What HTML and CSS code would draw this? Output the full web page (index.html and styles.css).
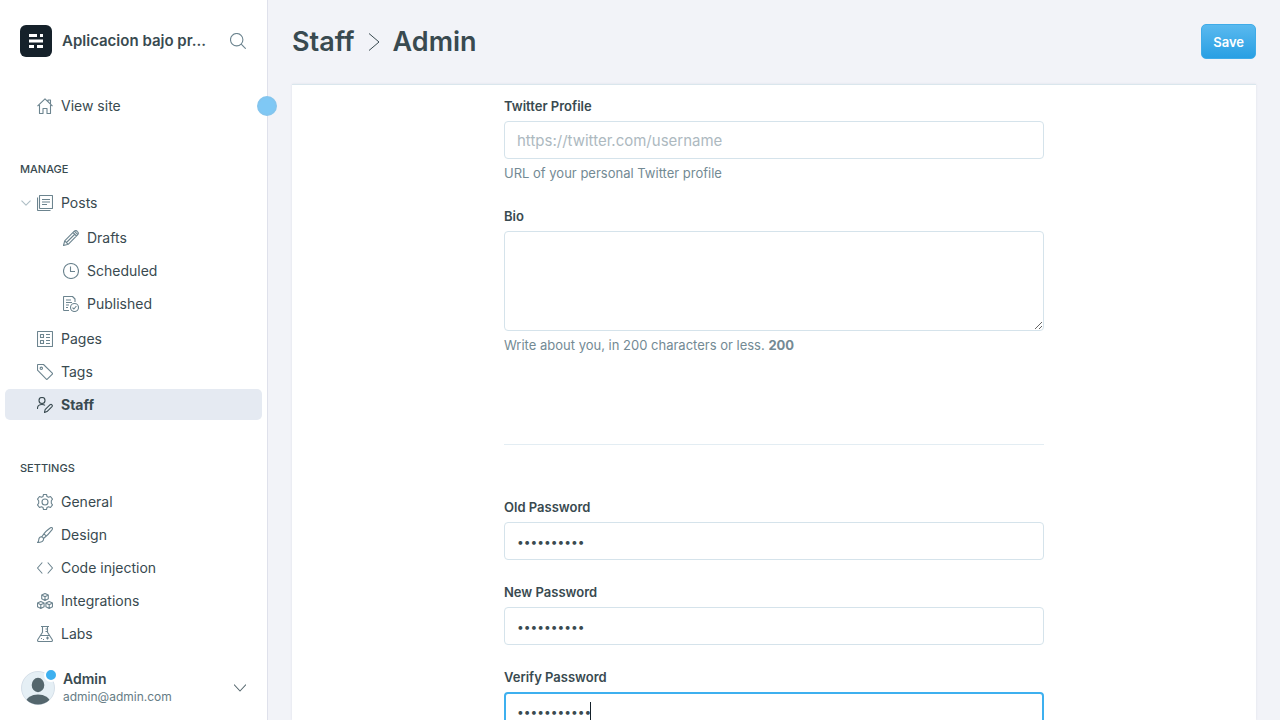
FILE: index.html
```html
<!DOCTYPE html>
<html lang="en">
<head>
<meta charset="utf-8">
<meta name="viewport" content="width=device-width, initial-scale=1">
<title>Staff - Admin</title>
<link rel="stylesheet" href="styles.css">
</head>
<body>
<div class="app">
  <nav class="sidebar" aria-label="Main">
    <header class="brand">
      <svg class="brand-logo" viewBox="0 0 32 32" aria-hidden="true"><rect width="32" height="32" rx="6" fill="#15212a"/><path fill="#fff" d="M9 9h8v3H9zM20 9h3v3h-3zM9 14.500h14v3H9zM9 20h5v3H9zM17 20h6v3h-6z"/></svg>
      <strong class="brand-name">Aplicacion bajo pr...</strong>
      <button class="icon-button" type="button" aria-label="Search"><svg class="icon" viewBox="0 0 16 16"><circle cx="6.700" cy="6.700" r="6.200"/><path d="M11.200 11.200l4.500 4.500"/></svg></button>
    </header>

    <div class="nav-scroll">
      <ul class="nav-list site-list">
        <li class="nav-item"><a class="nav-link" href="#"><svg class="icon" viewBox="0 0 16 16"><path d="M.500 8.200L8 .900l7.500 7.300M2.500 7v8.500h3.500v-5h4v5h3.500V7M11 3.500V2h2.500v4"/></svg>View site</a></li>
      </ul>

      <h2 class="nav-title">Manage</h2>
      <ul class="nav-list">
        <li class="nav-item">
          <button class="nav-toggle" type="button" aria-label="Collapse posts" aria-expanded="true"><svg class="icon icon-toggle" viewBox="0 0 10 10"><path d="M.500 2.700L5 7.200l4.500-4.500"/></svg></button>
          <a class="nav-link" href="#"><svg class="icon" viewBox="0 0 16 16"><rect x="2.500" y=".500" width="13" height="13" rx=".500"/><path d="M.500 2.500v12.300q0 .700.700.700h12.300M5 4.500h8M5 7h8M5 9.500h5"/></svg>Posts</a>
        </li>
        <li>
          <ul class="nav-list nav-sub">
            <li class="nav-item"><a class="nav-link" href="#"><svg class="icon" viewBox="0 0 16 16"><path d="M.500 15.500l1.200-4.700L11.300 1.200q1.700-1.400 3.100.400 1.700 1.600.400 3.100L5.200 14.300zM1.700 10.800l3.500 3.500M10 2.500L13.500 6M11.300 1.200l3.500 3.500M3.500 12.500l8-8"/></svg>Drafts</a></li>
            <li class="nav-item"><a class="nav-link" href="#"><svg class="icon" viewBox="0 0 16 16"><circle cx="8" cy="8" r="7.500"/><path d="M7.500 3.500v5H12"/></svg>Scheduled</a></li>
            <li class="nav-item"><a class="nav-link" href="#"><svg class="icon" viewBox="0 0 16 16"><path d="M6 14.500H1.200q-.700 0-.700-.700V1.200q0-.700.700-.700h8.300l2.500 2.500v3M3 4h5M3 6.500h6M3 9h3M3 11.500h2"/><circle cx="11.500" cy="11.500" r="4"/><path d="M9.500 11.700l1.400 1.300 2.500-3"/></svg>Published</a></li>
          </ul>
        </li>
        <li class="nav-item"><a class="nav-link" href="#"><svg class="icon" viewBox="0 0 16 16"><rect x=".500" y=".500" width="15" height="15" rx=".500"/><path d="M3.500 3.500h3v3h-3zM3.500 9.500h3v3h-3zM9 3.500h4M9 6.500h4M9 9.500h4M9 12.500h4"/></svg>Pages</a></li>
        <li class="nav-item"><a class="nav-link" href="#"><svg class="icon" viewBox="0 0 16 16"><path d="M.500 1.200v5l8.800 9q.500.500 1 0l5-5q.500-.500 0-1L6.500.500H1.200q-.700 0-.700.700z"/><circle cx="4.300" cy="4.300" r="1.200"/></svg>Tags</a></li>
        <li class="nav-item is-active"><a class="nav-link" href="#" aria-current="page"><svg class="icon" viewBox="0 0 16 16"><circle cx="5" cy="3.500" r="3"/><path d="M.500 12V11Q.700 7.500 5 7.500q2 0 3 .900M7.500 15.500l.600-2.800 5-5q1-.700 1.800.100.900.900.100 1.800l-5 5z"/></svg>Staff</a></li>
      </ul>

      <h2 class="nav-title">Settings</h2>
      <ul class="nav-list">
        <li class="nav-item"><a class="nav-link" href="#"><svg class="icon" viewBox="0 0 16 16"><path d="M6.500.500h3l.500 2 1.500.800 2-.800 2 2.600-1.200 1.700v2.400l1.200 1.700-2 2.600-2-.800-1.500.800-.500 2h-3l-.500-2-1.500-.800-2 .800-2-2.600 1.200-1.700V6.800L.500 5.100l2-2.600 2 .800L6 2.500z"/><circle cx="8" cy="8" r="3"/></svg>General</a></li>
        <li class="nav-item"><a class="nav-link" href="#"><svg class="icon" viewBox="0 0 16 16"><path d="M.500 15.500q1.200-.800 1.200-2.500Q2 9.800 4.300 9.800q2 .200 2.300 2.200Q6.500 15.500.500 15.500zM4.800 9.700q4-6.200 8.700-9 1.200-.500 1.800.200.400.700-.200 1.700Q11.500 7.500 6.500 11.500M7 6.800l2.400 2.300"/></svg>Design</a></li>
        <li class="nav-item"><a class="nav-link" href="#"><svg class="icon" viewBox="0 0 16 16"><path d="M5.300 2.500L.500 8l4.800 5.500M10.700 2.500L15.500 8l-4.800 5.500"/></svg>Code injection</a></li>
        <li class="nav-item"><a class="nav-link" href="#"><svg class="icon" viewBox="0 0 16 16"><path d="M8 .500l3.300 1.500v3.800L8 7.500 4.700 5.800V2zM4.700 2L8 3.700 11.300 2M8 3.700v3.800M3.800 8.500l3.300 1.500v3.800l-3.300 1.700-3.300-1.700V10zM.500 10l3.300 1.700L7.100 10M3.800 11.700v3.800M12.200 8.500l3.300 1.500v3.800l-3.300 1.700-3.300-1.700V10zM8.900 10l3.300 1.700 3.300-1.700M12.200 11.700v3.800"/></svg>Integrations</a></li>
        <li class="nav-item"><a class="nav-link" href="#"><svg class="icon" viewBox="0 0 16 16"><path d="M4 .500h8M5.500.500v5.700L.700 13.800q-.500 1.700 1 1.700h12.600q1.500 0 1-1.700L10.500 6.200V.500M3.300 9.500h9.400M8.500 3h2M8.500 5.500h2M10.500 10.500v3M9 12h3M4 12.500h1M6 13.500h1"/></svg>Labs</a></li>
      </ul>
    </div>

    <button class="account" type="button">
      <span class="avatar">
        <svg viewBox="0 0 34 34" aria-hidden="true"><defs><clipPath id="avatar-clip"><circle cx="17" cy="17" r="16.500"/></clipPath></defs><circle cx="17" cy="17" r="16.500" fill="#e5eff5" stroke="#d5dfe8"/><g clip-path="url(#avatar-clip)" fill="#54666d"><ellipse cx="17" cy="14" rx="6.300" ry="7.200"/><ellipse cx="17" cy="31" rx="12" ry="7.500"/></g></svg>
        <span class="badge"></span>
      </span>
      <span class="account-text"><strong class="account-name">Admin</strong><span class="account-mail">admin@admin.com</span></span>
      <svg class="icon icon-account" viewBox="0 0 12 12"><path d="M0 2.500l6 6.500 6-6.500"/></svg>
    </button>
    <span class="pointer"></span>
  </nav>

  <main class="main">
    <header class="page-header">
      <h1 class="page-title"><a class="page-link" href="#">Staff</a><svg class="title-arrow" viewBox="0 0 12 18" aria-hidden="true"><path d="M1 .500l10 8.500L1 17.500"/></svg>Admin</h1>
      <button class="save" type="submit" form="profile">Save</button>
    </header>
    <section class="panel">
      <form class="form" id="profile">
        <div class="field">
          <label class="label" for="twitter">Twitter Profile</label>
          <input class="input" id="twitter" type="url" placeholder="https://twitter.com/username">
          <p class="hint">URL of your personal Twitter profile</p>
        </div>
        <div class="field">
          <label class="label" for="bio">Bio</label>
          <textarea class="input textarea" id="bio"></textarea>
          <p class="hint">Write about you, in 200 characters or less. <b>200</b></p>
        </div>
        <hr class="divider">
        <div class="field">
          <label class="label" for="old">Old Password</label>
          <input class="input password" id="old" type="password" value="aaaaaaaaaa">
        </div>
        <div class="field">
          <label class="label" for="new">New Password</label>
          <input class="input password" id="new" type="password" value="aaaaaaaaaa">
        </div>
        <div class="field">
          <label class="label" for="verify">Verify Password</label>
          <input class="input password is-focused" id="verify" type="password" value="aaaaaaaaaaa">
          <span class="caret"></span>
        </div>
      </form>
    </section>
  </main>
</div>
</body>
</html>
```

FILE: styles.css
```css
*, *::before, *::after { box-sizing: border-box; }
body {
  margin: 0;
  background: #f2f3f8;
  color: #394a50;
  font: 14px/20px Inter, "Liberation Sans", sans-serif;
}
button, input, textarea { font: inherit; color: inherit; }
button { padding: 0; border: 0; background: none; cursor: pointer; }
a { color: inherit; text-decoration: none; }
h1, h2, p, ul { margin: 0; padding: 0; }
ul { list-style: none; }

.app { display: flex; height: 100vh; overflow: hidden; }

.icon {
  flex: none;
  width: 16px;
  height: 16px;
  fill: none;
  stroke: #6c848f;
  stroke-width: 1.1;
  stroke-linejoin: round;
}

.sidebar {
  position: relative;
  display: flex;
  flex: none;
  flex-direction: column;
  width: 268px;
  background: #fff;
  border-right: 1px solid #dfe1eb;
}
.brand {
  display: flex;
  align-items: center;
  gap: 10px;
  padding: 25px 21px 33px 20px;
}
.brand-logo { flex: none; width: 32px; height: 32px; }
.brand-name {
  flex: 1;
  min-width: 0;
  font-size: 15px;
  font-weight: 600;
  white-space: nowrap;
}
.icon-button { display: flex; }

.nav-scroll { flex: 1; min-height: 0; padding: 0 5px; overflow: hidden; }
.nav-list { display: flex; flex-direction: column; gap: 2px; }
.nav-item {
  display: flex;
  height: 31px;
  padding-left: 32px;
  border-radius: 5px;
}
.nav-link { display: flex; flex: 1; align-items: center; gap: 8px; }
.nav-sub { padding: 2px 0 2px 26px; }
.nav-toggle {
  display: flex;
  align-items: center;
  width: 32px;
  margin-left: -32px;
  padding-left: 16px;
}
.icon-toggle { width: 10px; height: 10px; stroke: #aebec5; }
.nav-title {
  padding: 38px 15px 8px;
  font-size: 11px;
  font-weight: 500;
  line-height: 20px;
  text-transform: uppercase;
}
.is-active { background: #e5eaf2; font-weight: 700; }
.is-active .icon { stroke: #394a50; }

.account {
  display: flex;
  align-items: center;
  padding: 8px 21px 15px;
  text-align: left;
}
.avatar { position: relative; display: flex; flex: none; width: 34px; height: 34px; }
.badge {
  position: absolute;
  top: -3px;
  right: -3px;
  width: 14px;
  height: 14px;
  background: #3eb0ef;
  border: 2px solid #fff;
  border-radius: 50%;
}
.account-text { display: flex; flex: 1; flex-direction: column; margin-left: 8px; }
.account-name { font-weight: 600; line-height: 18px; }
.account-mail { color: #667c85; font-size: 12px; line-height: 17px; }
.icon-account { width: 12px; height: 12px; stroke: #54666d; }
.pointer {
  position: absolute;
  top: 96px;
  right: -10px;
  width: 20px;
  height: 20px;
  background: #7fc8f5;
  border: 2px solid #84c5ee;
  border-radius: 50%;
}

.main { display: flex; flex: 1; flex-direction: column; min-width: 0; padding: 0 24px; }
.page-header {
  display: flex;
  flex: none;
  align-items: center;
  justify-content: space-between;
  padding: 24px 0 25px;
}
.page-title { display: flex; align-items: center; font-size: 27px; font-weight: 600; line-height: 35px; }
.title-arrow { width: 12px; height: 18px; margin: 1px 13px 0; fill: none; stroke: #394a50; stroke-width: 1; }
.save {
  height: 35px;
  padding: 0 11px;
  border: 1px solid #3fabe8;
  border-radius: 5px;
  background: linear-gradient(#5ab9ef, #289fe3);
  color: #fff;
  font-size: 13px;
  font-weight: 600;
}
.panel {
  flex: 1;
  min-height: 0;
  padding: 13px 24px 0;
  overflow: hidden;
  background: #fff;
  border-top: 1px solid #dae6ed;
  box-shadow: 0 0 2px #dde1ea;
}
.form { display: flex; flex-direction: column; gap: 24px; max-width: 540px; margin: 0 auto; }
.field { position: relative; display: flex; flex-direction: column; }
.label { margin-bottom: 7px; font-size: 13px; font-weight: 600; line-height: 16px; }
.input {
  width: 100%;
  height: 38px;
  padding: 0 12px;
  border: 1px solid #d5e3eb;
  border-radius: 4px;
  background: #fff;
  font-size: 15px;
  outline: none;
}
.input::placeholder { color: #adb9bf; }
.textarea { height: 100px; padding: 8px 12px; resize: vertical; }
.password { font-size: 12px; }
.is-focused { padding: 0 11px; border: 2px solid #3eb0ef; }
.hint { margin: 4px 0 1px; color: #738a94; font-size: 13px; line-height: 20px; }
.divider { width: 100%; height: 1px; margin: 64px 0 30px; border: 0; background: #e3edf3; }
.caret { position: absolute; top: 33px; left: 86px; width: 1px; height: 19px; background: #15212a; }
```
